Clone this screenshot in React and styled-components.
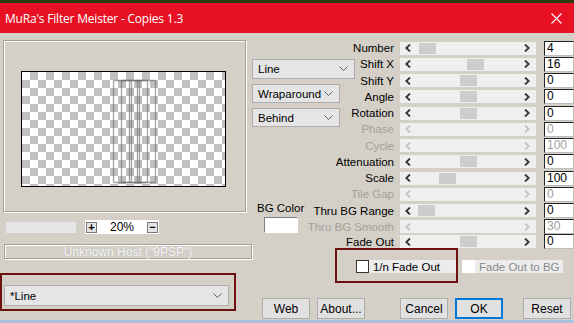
import React from 'react';
import styled, { createGlobalStyle } from 'styled-components';

const Global = createGlobalStyle`
    html, body { margin: 0; padding: 0; overflow: hidden; }
    body { background: #d4d0c8; font-family: "Liberation Sans", Arial, sans-serif; }
`;

const Window = styled.div`
    width: 574px;
    height: 323px;
    display: flex;
    flex-direction: column;
    overflow: hidden;
`;

const DesktopTop = styled.div`
    height: 3px;
    background: #2c3a12;
`;

const TitleBar = styled.div`
    height: 30px;
    background: #e81123;
    color: #fff;
    display: flex;
    align-items: center;
    justify-content: space-between;
    padding: 0 12px 0 5px;
    font-family: "Open Sans", "Noto Sans", sans-serif;
    font-size: 12px;
    letter-spacing: -0.2px;
`;

const Body = styled.div`
    height: 287px;
    display: grid;
    grid-template-columns: 252px 322px;
    background: #d4d0c8;
`;

const DesktopBottom = styled.div`
    flex: 1;
    background: #a9c2dc;
`;

/* ---------- left column ---------- */
const LeftCol = styled.div`
    display: flex;
    flex-direction: column;
    padding-top: 7px;
`;

const PreviewPanel = styled.div`
    margin-left: 3px;
    width: 243px;
    height: 172px;
    border: 1px solid #a4a099;
    box-shadow: inset 1px 1px 0 #fff, 1px 1px 0 #fff;
    display: flex;
    align-items: center;
    justify-content: center;
    padding-top: 6px;
    box-sizing: border-box;
`;

const Checker = styled.div`
    width: 203px;
    height: 114px;
    border: 1px solid #000;
    margin-right: 2px;
    background: repeating-conic-gradient(#c0c0c0 0 25%, #fff 0 50%) 0 0 / 16px 16px;
    display: flex;
`;

const ZoomRow = styled.div`
    display: flex;
    align-items: center;
    margin-top: 8px;
    height: 14px;
`;

const ZoomBlank = styled.div`
    margin-left: 5px;
    width: 72px;
    height: 13px;
    background: #e6e6e6;
    border: 1px solid #cfcfcf;
    box-sizing: border-box;
`;

const ZoomBox = styled.div`
    margin-left: 8px;
    width: 74px;
    height: 14px;
    background: #fff;
    display: flex;
    align-items: center;
    justify-content: space-between;
    font-size: 12px;
    color: #000;
`;

const ZoomBtn = styled.div`
    width: 11px;
    height: 11px;
    border: 1px solid #777;
    background: #e4e4e4;
    box-sizing: border-box;
    display: flex;
    align-items: center;
    justify-content: center;
    font-size: 11px;
    font-weight: bold;
    line-height: 1;
    margin: 0 1px;
`;

const HostBox = styled.div`
    margin: 10px 0 0 4px;
    width: 248px;
    height: 15px;
    box-sizing: border-box;
    border: 1px solid #a4a099;
    box-shadow: inset 1px 1px 0 #fff, 1px 1px 0 #fff;
    display: flex;
    align-items: center;
    justify-content: center;
    font-size: 12px;
    color: #f8f8f8;
    text-shadow: 0 0 1px #a8a8a8;
`;

const Highlight = styled.div`
    border: 2px solid #6d1111;
    box-sizing: border-box;
`;

const LeftHighlight = styled(Highlight)`
    margin-top: 14px;
    width: 236px;
    height: 38px;
    padding: 10px 0 0 2px;
`;

const Combo = styled.div`
    width: ${p => p.$w}px;
    height: ${p => p.$h}px;
    box-sizing: border-box;
    background: #e5e5e5;
    border: 1px solid #adadad;
    display: flex;
    align-items: center;
    justify-content: space-between;
    padding: 0 6px 0 5px;
    font-size: 11.5px;
    color: #000;
    white-space: nowrap;
`;

const Chevron = () => (
    <svg width="9" height="6" viewBox="0 0 9 6">
        <path d="M0.5 0.5 L4.5 4.5 L8.5 0.5" fill="none" stroke="#606060" strokeWidth="1" />
    </svg>
);

/* ---------- right side ---------- */
const RightCol = styled.div`
    display: flex;
    flex-direction: column;
    padding-top: 7px;
`;

const ParamGrid = styled.div`
    display: grid;
    grid-template-columns: 58px 84px 142px 38px;
    grid-template-rows: repeat(12, 16.25px) 13px;
`;

const MidCol = styled.div`
    grid-column: 1 / 3;
    grid-row: 1 / -1;
    display: flex;
    flex-direction: column;
    align-items: flex-start;
    padding-top: 19px;
    gap: 5px;
`;

const BgColor = styled.div`
    margin: 70px 0 0 5px;
    display: flex;
    flex-direction: column;
    align-items: center;
    gap: 3px;
    font-size: 11.5px;
    color: #000;
`;

const Swatch = styled.div`
    width: 34px;
    height: 16px;
    box-sizing: border-box;
    background: #fff;
    border: 1px solid;
    border-color: #808080 #fff #fff #808080;
`;

const Label = styled.div`
    grid-column: 2;
    grid-row: ${p => p.$row};
    justify-self: end;
    align-self: center;
    white-space: nowrap;
    font-size: 11.5px;
    color: ${p => (p.$off ? '#a3a09b' : '#000')};
`;

const Scroll = styled.div`
    grid-column: 3;
    grid-row: ${p => p.$row};
    margin-left: 6px;
    align-self: center;
    height: 13px;
    background: #efefef;
    display: flex;
    align-items: center;
    padding: 0 6px 0 5px;
`;

const Track = styled.div`
    flex: 1;
    height: 11px;
    display: flex;
    margin: 0 3px;
`;

const Thumb = styled.div`
    width: 17px;
    height: 11px;
    background: #cdcdcd;
    margin-left: ${p => p.$pos}px;
`;

const Value = styled.div`
    grid-column: 4;
    grid-row: ${p => p.$row};
    margin-left: 8px;
    width: 30px;
    align-self: center;
    height: 15px;
    box-sizing: border-box;
    background: #fff;
    border: 1px solid;
    border-color: #222 #bdbdbd #bdbdbd #222;
    font-size: 12px;
    line-height: 13px;
    padding-left: 2px;
    color: ${p => (p.$off ? '#a0a0a0' : '#000')};
`;

const Arrow = ({ dir, off }) => (
    <svg width="6" height="8" viewBox="0 0 6 8">
        <path
            d={dir === 'l' ? 'M5 0.5 L1.3 4 L5 7.5' : 'M1 0.5 L4.7 4 L1 7.5'}
            fill="none"
            stroke={off ? '#c4c4c4' : '#333'}
            strokeWidth="1.8"
        />
    </svg>
);

const CheckRow = styled.div`
    display: flex;
    align-items: flex-start;
`;

const CheckHighlight = styled(Highlight)`
    margin-left: 83px;
    width: 123px;
    height: 35px;
    padding: 10px 0 0 19px;
`;

const CheckItem = styled.div`
    display: flex;
    align-items: center;
    height: 13px;
    background: #ececec;
    font-size: 11.5px;
    white-space: nowrap;
    color: ${p => (p.$off ? '#8a8a8a' : '#000')};
    padding-right: ${p => p.$pr}px;
    margin: ${p => p.$m || 0};
`;

const Box = styled.div`
    width: 13px;
    height: 13px;
    box-sizing: border-box;
    background: #fff;
    border: 1px solid ${p => (p.$off ? '#fff' : '#333')};
    margin-right: ${p => p.$gap}px;
`;

const ButtonRow = styled.div`
    display: flex;
    margin: 15px 0 0 10px;
`;

const Button = styled.div`
    width: 48px;
    height: 21px;
    box-sizing: border-box;
    background: #e1e1e1;
    border: ${p => (p.$def ? '2px solid #0078d7' : '1px solid #adadad')};
    display: flex;
    align-items: center;
    justify-content: center;
    font-size: 12px;
    color: #000;
    margin-left: ${p => p.$ml || 0}px;
`;

const params = [
    { label: 'Number', value: '4', thumb: 19 },
    { label: 'Shift X', value: '16', thumb: 67 },
    { label: 'Shift Y', value: '0', thumb: 60 },
    { label: 'Angle', value: '0', thumb: 60 },
    { label: 'Rotation', value: '0', thumb: 60 },
    { label: 'Phase', value: '0', off: true },
    { label: 'Cycle', value: '100', off: true },
    { label: 'Attenuation', value: '0', thumb: 60 },
    { label: 'Scale', value: '100', thumb: 39 },
    { label: 'Tile Gap', value: '0', off: true },
    { label: 'Thru BG Range', value: '0', thumb: 18 },
    { label: 'Thru BG Smooth', value: '30', off: true },
    { label: 'Fade Out', value: '0', thumb: 60 },
];

const App = () => {
    return (
        <Window>
            <Global />
            <DesktopTop />
            <TitleBar>
                <span>MuRa's Filter Meister - Copies 1.3</span>
                <svg width="11" height="11" viewBox="0 0 11 11">
                    <path d="M0.5 0.5 L10.5 10.5 M10.5 0.5 L0.5 10.5" stroke="#fff" strokeWidth="1.1" />
                </svg>
            </TitleBar>
            <Body>
                <LeftCol>
                    <PreviewPanel>
                        <Checker>
                            <svg width="203" height="114" viewBox="0 0 203 114">
                                {[0, 1, 2, 3].map(i => (
                                    <rect key={i} x={91.5 + i * 8} y={8.5} width={18} height={102}
                                        fill="none" stroke="#666" strokeOpacity="0.6" strokeWidth="1.3" rx="1" />
                                ))}
                            </svg>
                        </Checker>
                    </PreviewPanel>
                    <ZoomRow>
                        <ZoomBlank />
                        <ZoomBox>
                            <ZoomBtn>+</ZoomBtn>
                            <span>20%</span>
                            <ZoomBtn>−</ZoomBtn>
                        </ZoomBox>
                    </ZoomRow>
                    <HostBox>Unknown Host ("9PSP")</HostBox>
                    <LeftHighlight>
                        <Combo $w={225} $h={21}>
                            <span>*Line</span>
                            <Chevron />
                        </Combo>
                    </LeftHighlight>
                </LeftCol>

                <RightCol>
                    <ParamGrid>
                        <MidCol>
                            <Combo $w={103} $h={20}><span>Line</span><Chevron /></Combo>
                            <Combo $w={88} $h={19}><span>Wraparound</span><Chevron /></Combo>
                            <Combo $w={88} $h={19}><span>Behind</span><Chevron /></Combo>
                            <BgColor>
                                <span>BG Color</span>
                                <Swatch />
                            </BgColor>
                        </MidCol>
                        {params.map((p, i) => (
                            <React.Fragment key={p.label}>
                                <Label $row={i + 1} $off={p.off}>{p.label}</Label>
                                <Scroll $row={i + 1}>
                                    <Arrow dir="l" off={p.off} />
                                    <Track>{!p.off && <Thumb $pos={p.thumb - 14} />}</Track>
                                    <Arrow dir="r" off={p.off} />
                                </Scroll>
                                <Value $row={i + 1} $off={p.off}>{p.value}</Value>
                            </React.Fragment>
                        ))}
                    </ParamGrid>
                    <CheckRow>
                        <CheckHighlight>
                            <CheckItem $pr={16}>
                                <Box $gap={4} />
                                1/n Fade Out
                            </CheckItem>
                        </CheckHighlight>
                        <CheckItem $off $pr={3} $m="12px 0 0 4px">
                            <Box $off $gap={4} />
                            Fade Out to BG
                        </CheckItem>
                    </CheckRow>
                    <ButtonRow>
                        <Button>Web</Button>
                        <Button $ml={7}>About...</Button>
                        <Button $ml={35}>Cancel</Button>
                        <Button $ml={7} $def>OK</Button>
                        <Button $ml={20}>Reset</Button>
                    </ButtonRow>
                </RightCol>
            </Body>
            <DesktopBottom />
        </Window>
    );
};

export default App;
